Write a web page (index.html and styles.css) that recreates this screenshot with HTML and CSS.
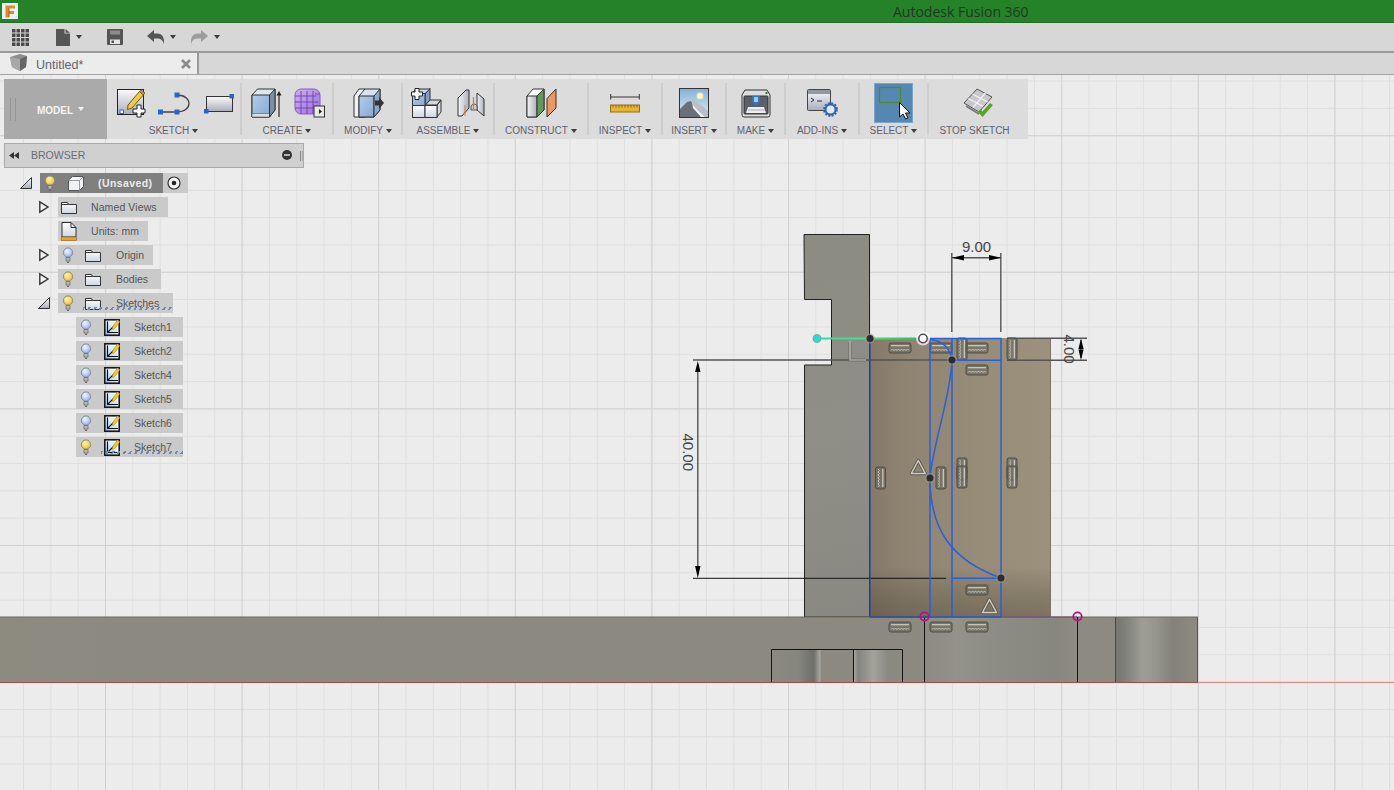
FILE: index.html
```html
<!DOCTYPE html>
<html lang="en">
<head>
<meta charset="utf-8">
<title>Autodesk Fusion 360</title>
<link rel="stylesheet" href="styles.css">
</head>
<body>
<svg class="defs" width="0" height="0" aria-hidden="true">
  <defs>
    <linearGradient id="paper" x1="0" y1="0" x2="0" y2="1"><stop offset="0" stop-color="#fbfbfc"/><stop offset="1" stop-color="#a7adba"/></linearGradient>
    <linearGradient id="paper2" x1="0" y1="0" x2="0" y2="1"><stop offset="0" stop-color="#ffffff"/><stop offset="1" stop-color="#cfd6e2"/></linearGradient>
    <linearGradient id="bluef" x1="0" y1="0" x2="1" y2="1"><stop offset="0" stop-color="#b5cdea"/><stop offset="1" stop-color="#86a8d2"/></linearGradient>
    <linearGradient id="purp" x1="0" y1="0" x2="1" y2="1"><stop offset="0" stop-color="#cfb0f2"/><stop offset="1" stop-color="#9c6fdc"/></linearGradient>
    <linearGradient id="greyf" x1="0" y1="0" x2="1" y2="0"><stop offset="0" stop-color="#f4f5f7"/><stop offset="1" stop-color="#aab0ba"/></linearGradient>
    <linearGradient id="sky" x1="0" y1="0" x2="0" y2="1"><stop offset="0" stop-color="#7fb2dc"/><stop offset="1" stop-color="#e4eef6"/></linearGradient>
    <linearGradient id="skbg" x1="0" y1="1" x2="1" y2="0"><stop offset="0" stop-color="#8fc0ee"/><stop offset=".6" stop-color="#e4f0fa"/><stop offset="1" stop-color="#ffffff"/></linearGradient>
    <radialGradient id="yel" cx=".4" cy=".35" r=".7"><stop offset="0" stop-color="#fff6b0"/><stop offset="1" stop-color="#eebc20"/></radialGradient>
    <radialGradient id="blu" cx=".4" cy=".35" r=".7"><stop offset="0" stop-color="#f2f6ff"/><stop offset="1" stop-color="#95b1e6"/></radialGradient>
    <symbol id="bulb-y" viewBox="0 0 12 16"><circle cx="6" cy="5.5" r="4.6" fill="url(#yel)" stroke="#8f8a70"/><path d="M4 10.5h4v3.6h-4z" fill="#b4b4b4" stroke="#6c6c6c" stroke-width=".7"/><path d="M5 15.3h2" stroke="#555"/></symbol>
    <symbol id="bulb-b" viewBox="0 0 12 16"><circle cx="6" cy="5.5" r="4.6" fill="url(#blu)" stroke="#7d8aa8"/><path d="M4 10.5h4v3.6h-4z" fill="#b4b4b4" stroke="#6c6c6c" stroke-width=".7"/><path d="M5 15.3h2" stroke="#555"/></symbol>
    <symbol id="folder" viewBox="0 0 16 13"><path d="M.5 12.5V1.5h6l1 2h8v9z" fill="url(#paper2)" stroke="#333"/><path d="M.5 3.5h7" stroke="#333"/></symbol>
    <symbol id="sk" viewBox="0 0 16 18"><rect x=".8" y="1.8" width="14.4" height="15.4" fill="url(#skbg)" stroke="#111" stroke-width="1.500"/><path d="M3.500 3.500V14.500H14M3.500 14.500L10 8" stroke="#111" fill="none" stroke-width="1.100"/><path d="M8.500 9L13.500 2l2.300 1.800L10.500 10.800l-2.200.7z" fill="#f6cc17" stroke="#a07a08" stroke-width=".5"/></symbol>
    <g id="hc">
      <rect x="-11" y="-5" width="22" height="10" rx="2" fill="#6f6c60" fill-opacity=".7" stroke="#4f4d46"/>
      <path d="M-9 -2.300H9" stroke="#cfcdc5" stroke-width="1.200"/>
      <path d="M-9 2.600l1.500-1.600 1.500 1.600 1.500-1.600 1.500 1.600 1.500-1.600 1.500 1.600 1.500-1.600 1.500 1.600 1.500-1.600 1.500 1.600 1.500-1.600 1.500 1.600" fill="none" stroke="#c6c4bc"/>
    </g>
    <g id="vc"><use href="#hc" transform="rotate(90)"/></g>
    <g id="tri"><path d="M0 -6.500L7 6.500H-7Z" fill="none" stroke="#5d5a50" stroke-width="3.400" stroke-linejoin="round"/><path d="M0 -6.500L7 6.500H-7Z" fill="none" stroke="#cfcdc5" stroke-width="1.500" stroke-linejoin="round"/></g>
    <g id="dot"><circle r="5" fill="#9a9a96" fill-opacity=".55"/><circle r="3.500" fill="#2a2c30"/></g>
    <pattern id="minor" width="27.32" height="27.32" patternUnits="userSpaceOnUse" x="23.04" y="25.92"><path d="M.5 0V27.32M0 .5H27.32" fill="none" stroke="#dfdfdf"/></pattern>
    <pattern id="major" width="136.6" height="136.6" patternUnits="userSpaceOnUse" x="105" y="135.2"><path d="M.5 0V136.6M0 .5H136.6" fill="none" stroke="#d2d2d2"/></pattern>
    <linearGradient id="upright" x1="804" y1="234" x2="870" y2="617" gradientUnits="userSpaceOnUse"><stop offset="0" stop-color="#8d8c82"/><stop offset=".5" stop-color="#8f8e87"/><stop offset="1" stop-color="#8a8981"/></linearGradient>
    <linearGradient id="brown" x1="870" y1="0" x2="1051" y2="0" gradientUnits="userSpaceOnUse"><stop offset="0" stop-color="#85796a"/><stop offset=".2" stop-color="#8f8472"/><stop offset=".6" stop-color="#978c78"/><stop offset="1" stop-color="#9c917d"/></linearGradient>
    <linearGradient id="shade" x1="0" y1="338" x2="0" y2="617" gradientUnits="userSpaceOnUse"><stop offset="0" stop-color="#000" stop-opacity="0"/><stop offset=".82" stop-color="#000" stop-opacity="0"/><stop offset="1" stop-color="#2b2412" stop-opacity=".28"/></linearGradient>
    <linearGradient id="basefill" x1="0" y1="0" x2="1198" y2="0" gradientUnits="userSpaceOnUse"><stop offset="0" stop-color="#8d8a80"/><stop offset=".5" stop-color="#8b8980"/><stop offset="1" stop-color="#8d8b81"/></linearGradient>
    <linearGradient id="band1" x1="925" y1="0" x2="1078" y2="0" gradientUnits="userSpaceOnUse"><stop offset="0" stop-color="#8c8a81"/><stop offset=".2" stop-color="#92918a"/><stop offset=".5" stop-color="#8c8c85"/><stop offset=".85" stop-color="#87867f"/><stop offset="1" stop-color="#8e8c83"/></linearGradient>
    <linearGradient id="band2" x1="1116" y1="0" x2="1198" y2="0" gradientUnits="userSpaceOnUse"><stop offset="0" stop-color="#74766f"/><stop offset=".12" stop-color="#7f817a"/><stop offset=".32" stop-color="#9d9c95"/><stop offset=".48" stop-color="#97968e"/><stop offset=".7" stop-color="#83827a"/><stop offset="1" stop-color="#8d8b81"/></linearGradient>
    <linearGradient id="cut1" x1="771" y1="0" x2="821" y2="0" gradientUnits="userSpaceOnUse"><stop offset="0" stop-color="#8b8a81"/><stop offset=".55" stop-color="#86867e"/><stop offset=".86" stop-color="#6d6f69"/><stop offset=".98" stop-color="#a9a9a2"/><stop offset="1" stop-color="#8d8b82"/></linearGradient>
    <linearGradient id="cut2" x1="853" y1="0" x2="903" y2="0" gradientUnits="userSpaceOnUse"><stop offset="0" stop-color="#b0b0a9"/><stop offset=".1" stop-color="#82837c"/><stop offset=".4" stop-color="#a3a39c"/><stop offset=".7" stop-color="#8a8a82"/><stop offset="1" stop-color="#8c8a81"/></linearGradient>
    <linearGradient id="construct" x1="817" y1="0" x2="923" y2="0" gradientUnits="userSpaceOnUse"><stop offset="0" stop-color="#2fdcb4"/><stop offset=".5" stop-color="#4fe07c"/><stop offset="1" stop-color="#2eb86a"/></linearGradient>
  </defs>
</svg>
<div class="app">
  <header class="titlebar">
    <svg class="logo" width="16" height="16" viewBox="0 0 16 16"><rect width="16" height="16" fill="#e4f3f7"/><path d="M3.500 2.500h9.500v3H7v2.500h5v3H7v3.500H3.500z" fill="#e8842a"/><path d="M7 5.500v8.500" stroke="#b85f14"/></svg>
    <span class="app-title">Autodesk Fusion 360</span>
  </header>
  <nav class="quickbar">
    <svg class="qa qa-grid" width="17" height="17" viewBox="0 0 17 17"><path d="M0 0h3.500v3.500H0zM4.500 0H8v3.500H4.500zM9 0h3.500v3.500H9zM13.500 0H17v3.500h-3.500zM0 4.500h3.500V8H0zM4.500 4.500H8V8H4.500zM9 4.500h3.500V8H9zM13.500 4.500H17V8h-3.500zM0 9h3.500v3.500H0zM4.500 9H8v3.500H4.500zM9 9h3.500v3.500H9zM13.500 9H17v3.500h-3.500zM0 13.500h3.500V17H0zM4.500 13.500H8V17H4.500zM9 13.500h3.500V17H9zM13.500 13.500H17V17h-3.500z" fill="#4a4a4a"/></svg>
    <svg class="qa qa-doc" width="14" height="17" viewBox="0 0 14 17"><path d="M0 0h8.500v4.500H14V17H0zM9.500 0L14 3.700H9.500z" fill="#555"/></svg>
    <i class="caret caret-q"></i>
    <svg class="qa qa-save" width="16" height="16" viewBox="0 0 16 16"><path d="M1 0h14a1 1 0 0 1 1 1v14a1 1 0 0 1-1 1H1a1 1 0 0 1-1-1V1a1 1 0 0 1 1-1z" fill="#555"/><rect x="3" y="1.500" width="10" height="4" fill="#8c8c8c"/><rect x="3" y="10.500" width="10" height="4.500" fill="#e4e4e4"/><rect x="4.500" y="11.500" width="2.500" height="2.500" fill="#555"/></svg>
    <svg class="qa qa-undo" width="17" height="14" viewBox="0 0 17 14"><path d="M7 0v3.500h3.500c4 0 6.500 3 6.500 8v2.500c-1-3.500-3-5.500-6.500-5.500H7V12L0 6z" fill="#555"/></svg>
    <i class="caret caret-q caret-undo"></i>
    <svg class="qa qa-redo" width="17" height="14" viewBox="0 0 17 14"><path d="M10 0v3.500H6.500c-4 0-6.500 3-6.500 8v2.500c1-3.500 3-5.500 6.500-5.500H10V12l7-6z" fill="#9c9c9c"/></svg>
    <i class="caret caret-q caret-off"></i>
  </nav>
  <div class="tabbar">
    <div class="tab">
      <svg class="tab-cube" width="17" height="17" viewBox="0 0 17 17"><path d="M0 3L10 0l7 2-1 11-6 4-8-4z" fill="#8c8c8c"/><path d="M0 3l10 2v12l-8-4z" fill="#a8a8a8"/><path d="M10 5l7-3-1 11-6 4z" fill="#666"/></svg>
      <span class="tab-name">Untitled*</span>
      <svg class="tab-x" width="10" height="10" viewBox="0 0 10 10"><path d="M1 1l8 8M9 1l-8 8" stroke="#8a8a8a" stroke-width="2.600"/></svg>
    </div>
  </div>
  <main class="workspace">
    <svg class="canvas" viewBox="0 75 1394 715" width="1394" height="715">
      <rect x="0" y="75" width="1394" height="715" fill="#ececec"/>
      <rect x="0" y="75" width="1394" height="715" fill="url(#minor)"/>
      <rect x="0" y="75" width="1394" height="715" fill="url(#major)"/>

      <path d="M804 234.500H869.500V617H804.500V365H831.500V299.500H804.500Z" fill="url(#upright)" stroke="#222"/>
      <rect x="870" y="338" width="181" height="279" fill="url(#brown)"/>
      <rect x="870" y="338" width="181" height="279" fill="url(#shade)"/>
      <path d="M1050.500 338V617" stroke="#7d7465"/>

      <rect x="0" y="617" width="1198" height="65" fill="url(#basefill)"/>
      <rect x="925" y="617.500" width="153" height="65" fill="url(#band1)"/>
      <rect x="1116" y="617.500" width="82" height="65" fill="url(#band2)"/>
      <rect x="771" y="649" width="50" height="33" fill="url(#cut1)"/>
      <rect x="853" y="649" width="50" height="33" fill="url(#cut2)"/>
      <path d="M0 617H1198" stroke="#6b6b64" stroke-width="1"/>
      <path d="M1197.500 617V682" stroke="#555650"/>
      <path d="M1115.500 617V682" stroke="#4a4b46"/>
      <path d="M771.500 682V649.500H902.500V682M853.500 649.500V682M924.500 617V682M1077.500 617V682" fill="none" stroke="#111"/>
      <path d="M0 682.500H1198" stroke="#a44a4a"/>
      <path d="M1198 682.500H1394" stroke="#e58a8a"/>

      <g fill="none" stroke="#555" stroke-width="1.400">
        <path d="M693 360H952"/>
        <path d="M697.800 364V574"/>
        <path d="M951.800 253V332M1000.800 253V332"/>
        <path d="M952 257.800H1001"/>
        <path d="M1007 338.200H1087M1007 360.200H1087"/>
        <path d="M1081 340V358"/>
      </g>
      <path d="M693 578.300H946" stroke="#111"/>
      <path d="M697.800 361l-2.700 11h5.400zM697.800 578l-2.700-12h5.400zM952 257.800l12-2.800v5.600zM1001 257.800l-12-2.800v5.600zM1081 338.500l-2.600 10.500h5.200zM1081 360l-2.600-10.500h5.200z" fill="#000"/>
      <text class="dim" x="962" y="251.500">9.00</text>
      <text class="dim" transform="translate(682.500 433.500) rotate(90)">40.00</text>
      <text class="dim" transform="translate(1064 334.500) rotate(90)">4.00</text>

      <g fill="none" stroke="#b8b6ae" stroke-width="2.400" stroke-opacity=".7"><path d="M850 341V360H866"/></g>
      <g fill="none" stroke="#6b6a63" stroke-width=".7"><path d="M848.600 342V361.300H866M851.400 342V358.700H866"/></g>

      <use href="#hc" x="900" y="348"/>
      <use href="#hc" x="941" y="348"/>
      <use href="#hc" x="977" y="348"/>
      <use href="#hc" x="977" y="370"/>
      <use href="#hc" x="977" y="590"/>
      <use href="#hc" x="900" y="627"/>
      <use href="#hc" x="941" y="627"/>
      <use href="#hc" x="977" y="627"/>
      <use href="#vc" x="962" y="349"/>
      <use href="#vc" x="1012" y="349"/>
      <use href="#vc" x="880.500" y="478"/>
      <use href="#vc" x="941" y="478"/>
      <use href="#vc" x="962" y="469"/>
      <use href="#vc" x="962" y="477"/>
      <use href="#vc" x="1012" y="469"/>
      <use href="#vc" x="1012" y="477"/>
      <use href="#tri" x="918.300" y="467"/>
      <use href="#tri" x="989.500" y="606"/>

      <g fill="none" stroke="#2a5fd8" stroke-width="1.500">
        <path d="M930 338.500H1001V617M930 338.500V617M952 338.500V617M952 360.200H1001M952 578.300H1001"/>
        <path d="M931 339.500Q949 342 952 360"/>
        <path d="M952 360C951 395 932 448 930 478C930 528 950 560 1001 578"/>
      </g>
      <path d="M870 338V617" stroke="#2d4c96" stroke-width="1.400"/>
      <path d="M870 617H930" stroke="#2d4c96" stroke-width="1.400"/>
      <path d="M930 617H1001" stroke="#2a55c0" stroke-width="1.400"/>
      <path d="M1001 617H1077" stroke="#7a4a80" stroke-width="1.200"/>

      <path d="M817 338.500H923" stroke="url(#construct)" stroke-width="2"/>
      <use href="#dot" x="870" y="338.500"/>
      <use href="#dot" x="952" y="360"/>
      <use href="#dot" x="930" y="478"/>
      <use href="#dot" x="1001" y="578"/>
      <circle cx="817" cy="338.500" r="4" fill="#29dcd0" stroke="#7fa8a4"/>
      <circle cx="923" cy="338.500" r="7" fill="#fff" fill-opacity=".7"/>
      <circle cx="923" cy="338.500" r="4.200" fill="#fff" stroke="#4c4c4c" stroke-width="1.500"/>
      <circle cx="924.500" cy="616.500" r="4.200" fill="none" stroke="#b01488" stroke-width="1.800"/>
      <circle cx="1077.500" cy="616.500" r="4.200" fill="none" stroke="#b01488" stroke-width="1.800"/>
    </svg>

    <section class="toolbar">
      <div class="model">
        <span class="grip"></span>
        <span class="model-label">MODEL</span>
        <i class="caret caret-model"></i>
      </div>

      <div class="group g-sketch">
        <div class="icons gap-sketch">
          <svg width="30" height="30" viewBox="0 0 30 30"><rect x=".5" y="1.500" width="26" height="25" fill="url(#paper)" stroke="#222"/><rect x="3" y="22" width="3.500" height="3.500" fill="#fff" stroke="#3568c8"/><path d="M11 17l11.500-13.500 4 3.300L15 20l-4.500 1.500z" fill="#f6c93f" stroke="#5a4a20" stroke-width=".9"/><path d="M22.500 3.500l1.500-1.800 4 3.300-1.500 1.800z" fill="#d88a4a" stroke="#5a4a20" stroke-width=".7"/><path d="M20 17h4v4h4v4h-4v4h-4v-4h-4v-4h4z" fill="#fff" stroke="#222"/></svg>
          <svg width="34" height="24" viewBox="0 0 34 24"><path d="M3 21H19M19 4C35 4 35 21 19 21" fill="none" stroke="#444" stroke-width="1.300"/><rect x="0" y="18.500" width="5" height="5" fill="#2f62c8"/><rect x="16.500" y="18.500" width="5" height="5" fill="#2f62c8"/><rect x="16.500" y="1.500" width="5" height="5" fill="#2f62c8"/></svg>
          <svg width="32" height="21" viewBox="0 0 32 21"><rect x="3.500" y="3.500" width="26" height="15" fill="url(#paper)" stroke="#333"/><rect x="26.500" y="1" width="4.500" height="4.500" fill="#2f62c8"/><rect x="1" y="16" width="4.500" height="4.500" fill="#2f62c8"/></svg>
        </div>
        <div class="label">SKETCH<i class="caret"></i></div>
      </div>

      <div class="group g-create">
        <div class="icons gap-create">
          <svg width="30" height="31" viewBox="0 0 30 31"><path d="M1 7L6.500 1H24V22l-5.500 7H1z" fill="#dfe6ee" stroke="#333"/><path d="M1 7H18.500V29H1z" fill="url(#bluef)" stroke="#333"/><path d="M1 25.500H18.500V29H1z" fill="#dce0e6" stroke="#555" stroke-width=".6"/><path d="M18.500 7L24 1V22l-5.500 7z" fill="#7e8ea5" stroke="#333"/><path d="M28 29V5" stroke="#333" stroke-width="1.300"/><path d="M28 3l-2.500 4.500h5z" fill="#222"/></svg>
          <svg width="31" height="30" viewBox="0 0 31 30"><rect x="1" y="1" width="25" height="25" rx="6" fill="url(#purp)" stroke="#8a5fc4"/><path d="M1 8H22M1 14H24M1 20H24M7 3V26M13 3V26M19 3V26M21 6H26" stroke="#6d3fb4" stroke-width=".9" fill="none"/><rect x="20" y="18" width="10.500" height="11" fill="#e9e9e9" stroke="#333"/><path d="M22 23.500h3V21l3 2.500-3 2.500v-2.500h-3z" fill="#222"/></svg>
        </div>
        <div class="label">CREATE<i class="caret"></i></div>
      </div>

      <div class="group g-modify">
        <div class="icons">
          <svg width="31" height="31" viewBox="0 0 31 31"><path d="M1 8L6 1H12V29H1z" fill="#eef1f5" stroke="#333"/><path d="M6 29V8L12 1H27V22l-6 7z" fill="#d9e2ec" stroke="#333"/><path d="M6 8H21V29H6z" fill="url(#bluef)" stroke="#333"/><path d="M21 8l6-7v21l-6 7z" fill="#8ea8c8" stroke="#333"/><path d="M22 12.500h4V9l5 6-5 6v-3.500h-4z" fill="#333"/></svg>
        </div>
        <div class="label">MODIFY<i class="caret"></i></div>
      </div>

      <div class="group g-assemble">
        <div class="icons gap-assemble">
          <svg width="31" height="30" viewBox="0 0 31 30"><path d="M14 17l4-5h12l-4 5zM26 17l4-5v12l-4 5z" fill="#d4d8de" stroke="#333"/><rect x="1.500" y="17.500" width="12.500" height="12" fill="url(#paper2)" stroke="#333"/><rect x="14" y="17.500" width="12" height="12" fill="url(#paper2)" stroke="#333"/><path d="M14 5.500l5-5V12l-5 5.500z" fill="#7f9fc8" stroke="#333"/><path d="M5 1H19L14 5.500H1z" fill="#c8d8ec" stroke="#333"/><rect x="1.500" y="5.500" width="12.500" height="12" fill="url(#bluef)" stroke="#333"/><path d="M4 .5h4v3.500h3.500v4H8v3.500H4V8H.5V4H4z" fill="#fff" stroke="#222"/></svg>
          <svg width="28" height="28" viewBox="0 0 28 28"><path d="M1 27V9L9 1h3v18l-7 8z" fill="url(#greyf)" stroke="#333"/><path d="M20 4l7 6v17l-7-6z" fill="url(#greyf)" stroke="#333"/><path d="M14 18c0-4 6-4 6 0v3h-6z" fill="#cfd3d8" stroke="#333" stroke-width=".8"/><path d="M16.500 8v12" stroke="#e67822" stroke-width="1.300"/><path d="M8 27V16" stroke="#e67822"/></svg>
        </div>
        <div class="label">ASSEMBLE<i class="caret"></i></div>
      </div>

      <div class="group g-construct">
        <div class="icons">
          <svg width="31" height="30" viewBox="0 0 31 30"><path d="M1 8L7 1H18V22l-7 7H1z" fill="#fff" stroke="#333"/><path d="M1 8H11V29H1z" fill="url(#greyf)" stroke="#333"/><path d="M11 8l7-7V22l-7 7z" fill="#5f9a58" stroke="#333"/><path d="M21 10.500L30 1V20l-9 9z" fill="#e99a62" stroke="#333"/></svg>
        </div>
        <div class="label">CONSTRUCT<i class="caret"></i></div>
      </div>

      <div class="group g-inspect">
        <div class="icons">
          <svg width="30" height="19" viewBox="0 0 30 19"><path d="M1 3H29M.7 0V5.500M29.300 0V5.500" stroke="#333" fill="none"/><rect x=".5" y="11" width="29" height="7" fill="#eab52d" stroke="#8d6d20"/><path d="M3 11v2.500M6 11v2.500M9 11v2.500M12 11v2.500M15 11v2.500M18 11v2.500M21 11v2.500M24 11v2.500M27 11v2.500" stroke="#6e5618" stroke-width=".8"/></svg>
        </div>
        <div class="label">INSPECT<i class="caret"></i></div>
      </div>

      <div class="group g-insert">
        <div class="icons">
          <svg width="30" height="30" viewBox="0 0 30 30"><rect x=".5" y=".5" width="29" height="29" fill="url(#sky)" stroke="#333"/><rect x="18" y="5" width="6" height="6" rx="1.500" fill="#fff8c8" stroke="#f2d98a"/><path d="M1 29V21L8 14l4-1 7 8 3 8z" fill="#6c6f78"/><path d="M12 13l3-2 3 4 7 4 4 4v6h-7z" fill="#b9c0c8"/><path d="M13 13c1 5 5 9 13 16h-4L14 20z" fill="#f4f6f8"/></svg>
        </div>
        <div class="label">INSERT<i class="caret"></i></div>
      </div>

      <div class="group g-make">
        <div class="icons">
          <svg width="30" height="29" viewBox="0 0 30 29"><path d="M1 6L4 1H26l3 5V26a2 2 0 0 1-2 2H3a2 2 0 0 1-2-2z" fill="#dedede" stroke="#333"/><rect x="3" y="7" width="24" height="18" rx="1" fill="#5b5f66" stroke="#333"/><path d="M11 7h8v6l-4 4-4-4z" fill="#2f74c8"/><path d="M13 8h4v5h-4z" fill="#a8c8ee"/><path d="M7 18h16l2 6H5z" fill="#eceef0"/><path d="M7 21h17" stroke="#aaa"/><rect x="24.500" y="3" width="2" height="2" fill="#0c8a2c"/></svg>
        </div>
        <div class="label">MAKE<i class="caret"></i></div>
      </div>

      <div class="group g-addins">
        <div class="icons">
          <svg width="31" height="28" viewBox="0 0 31 28"><rect x=".5" y=".5" width="23" height="21" rx="1" fill="url(#paper)" stroke="#444"/><rect x="1" y="1" width="22" height="4" fill="#9398a2"/><path d="M4 9l3 2-3 2M10 12h5" fill="none" stroke="#333"/><circle cx="23.500" cy="20.500" r="5" fill="#dfe9f6" stroke="#2d62b0" stroke-width="2"/><circle cx="23.500" cy="20.500" r="6.500" fill="none" stroke="#2d62b0" stroke-width="1.800" stroke-dasharray="2 1.400"/></svg>
        </div>
        <div class="label">ADD-INS<i class="caret"></i></div>
      </div>

      <div class="group g-select">
        <div class="select-btn">
          <svg width="39" height="40" viewBox="0 0 39 40"><rect x="4.500" y="3.500" width="21" height="15" fill="none" stroke="#4f8a2a" stroke-width="1.200"/><path d="M24.500 18.500V33l3.500-3 2.500 5 2.500-1-2.500-5h4.500z" fill="#fff" stroke="#111"/></svg>
        </div>
        <div class="label">SELECT<i class="caret"></i></div>
      </div>

      <div class="group g-stop">
        <div class="icons">
          <svg width="31" height="31" viewBox="0 0 31 31"><path d="M1 15L14 1 29 9 16 24z" fill="#c6c8cc" stroke="#555"/><path d="M5.500 10.500L20 18.500M9.500 6L24.500 14M10 19.500L22.500 5" fill="none" stroke="#f4f4f4" stroke-width="1.200"/><path d="M3 18l13 8" stroke="#777" stroke-width="1.500"/><path d="M15 24l4.500 5L30 17l-3-2-7.500 8.500-2-2.500z" fill="#5ba51c"/></svg>
        </div>
        <div class="label label-stop">STOP SKETCH</div>
      </div>
    </section>

    <section class="browser">
      <svg class="b-back" width="10" height="7" viewBox="0 0 10 7"><path d="M5 0v7L0 3.500zM10 0v7L5 3.500z" fill="#333"/></svg>
      <span class="b-title">BROWSER</span>
      <svg class="b-min" width="10" height="10" viewBox="0 0 10 10"><circle cx="5" cy="5" r="5" fill="#333"/><path d="M2 5h6" stroke="#ddd" stroke-width="1.500"/></svg>
      <span class="b-grip"></span>
    </section>

    <ul class="tree">
      <li class="row row-root">
        <svg class="twisty" width="12" height="12" viewBox="0 0 12 12"><path d="M.5 11.500L11.500 .5V11.500z" fill="url(#paper)" stroke="#333"/></svg>
        <div class="chip chip-root">
          <div class="chip-dark">
            <svg class="bulb"><use href="#bulb-y"/></svg>
            <svg class="cube" width="16" height="15" viewBox="0 0 16 15"><path d="M.5 4L4.500 .5H15.500V10.500L11.500 14.500H.5z" fill="#f0f2f5" stroke="#555"/><path d="M11.500 4.500V14.500M.5 4.500H11.500L15.500 .5" fill="none" stroke="#999"/></svg>
            <span class="root-name">(Unsaved)</span>
          </div>
          <svg class="target" width="14" height="14" viewBox="0 0 14 14"><circle cx="7" cy="7" r="6" fill="#f4f4f4" stroke="#333" stroke-width="1.200"/><circle cx="7" cy="7" r="2.300" fill="#222"/></svg>
        </div>
      </li>
      <li class="row">
        <svg class="twisty" width="10" height="12" viewBox="0 0 10 12"><path d="M.8 .8L9 6 .8 11.200z" fill="#f4f4f4" stroke="#333" stroke-width="1.400"/></svg>
        <div class="chip w-named">
          <svg class="ico ico-first" width="16" height="13"><use href="#folder"/></svg>
          <span class="lbl lbl-first">Named Views</span>
        </div>
      </li>
      <li class="row">
        <span class="twisty-empty"></span>
        <div class="chip w-units">
          <svg class="ico ico-first" width="16" height="19" viewBox="0 0 15 19"><path d="M.5 15V.5H9.500L14.500 5.500V15z" fill="url(#paper2)" stroke="#333"/><path d="M9.500 .5V5.500H14.500" fill="none" stroke="#333"/><rect x="0" y="15" width="15" height="3.500" fill="#e8a52a" stroke="#8d6414" stroke-width=".6"/></svg>
          <span class="lbl lbl-first">Units: mm</span>
        </div>
      </li>
      <li class="row">
        <svg class="twisty" width="10" height="12" viewBox="0 0 10 12"><path d="M.8 .8L9 6 .8 11.200z" fill="#f4f4f4" stroke="#333" stroke-width="1.400"/></svg>
        <div class="chip w-origin">
          <svg class="bulb"><use href="#bulb-b"/></svg>
          <svg class="ico" width="16" height="13"><use href="#folder"/></svg>
          <span class="lbl">Origin</span>
        </div>
      </li>
      <li class="row">
        <svg class="twisty" width="10" height="12" viewBox="0 0 10 12"><path d="M.8 .8L9 6 .8 11.200z" fill="#f4f4f4" stroke="#333" stroke-width="1.400"/></svg>
        <div class="chip w-bodies">
          <svg class="bulb"><use href="#bulb-y"/></svg>
          <svg class="ico" width="16" height="13"><use href="#folder"/></svg>
          <span class="lbl">Bodies</span>
        </div>
      </li>
      <li class="row">
        <svg class="twisty twisty-open" width="12" height="12" viewBox="0 0 12 12"><path d="M.5 11.500L11.500 .5V11.500z" fill="url(#paper)" stroke="#333"/></svg>
        <div class="chip w-sketches hatched">
          <svg class="bulb"><use href="#bulb-y"/></svg>
          <svg class="ico" width="16" height="13"><use href="#folder"/></svg>
          <span class="lbl">Sketches</span>
        </div>
      </li>
      <li class="row row-leaf">
        <div class="chip w-sketch">
          <svg class="bulb"><use href="#bulb-b"/></svg>
          <svg class="ico ico-sk" width="16" height="18"><use href="#sk"/></svg>
          <span class="lbl lbl-sk">Sketch1</span>
        </div>
      </li>
      <li class="row row-leaf">
        <div class="chip w-sketch">
          <svg class="bulb"><use href="#bulb-b"/></svg>
          <svg class="ico ico-sk" width="16" height="18"><use href="#sk"/></svg>
          <span class="lbl lbl-sk">Sketch2</span>
        </div>
      </li>
      <li class="row row-leaf">
        <div class="chip w-sketch">
          <svg class="bulb"><use href="#bulb-b"/></svg>
          <svg class="ico ico-sk" width="16" height="18"><use href="#sk"/></svg>
          <span class="lbl lbl-sk">Sketch4</span>
        </div>
      </li>
      <li class="row row-leaf">
        <div class="chip w-sketch">
          <svg class="bulb"><use href="#bulb-b"/></svg>
          <svg class="ico ico-sk" width="16" height="18"><use href="#sk"/></svg>
          <span class="lbl lbl-sk">Sketch5</span>
        </div>
      </li>
      <li class="row row-leaf">
        <div class="chip w-sketch">
          <svg class="bulb"><use href="#bulb-b"/></svg>
          <svg class="ico ico-sk" width="16" height="18"><use href="#sk"/></svg>
          <span class="lbl lbl-sk">Sketch6</span>
        </div>
      </li>
      <li class="row row-leaf">
        <div class="chip w-sketch hatched">
          <svg class="bulb"><use href="#bulb-y"/></svg>
          <svg class="ico ico-sk" width="16" height="18"><use href="#sk"/></svg>
          <span class="lbl lbl-sk">Sketch7</span>
        </div>
      </li>
    </ul>
  </main>
</div>
</body>
</html>
```

FILE: styles.css
```css
* { box-sizing: border-box; }
html, body { margin: 0; padding: 0; }
body { font-family: "Liberation Sans", Arial, sans-serif; background: #ececec; }
.defs { position: absolute; width: 0; height: 0; }
svg { display: block; flex: none; overflow: visible; }

.app { width: 1394px; height: 790px; display: flex; flex-direction: column; overflow: hidden; }

/* title bar */
.titlebar { height: 23px; flex: none; display: flex; align-items: center; background: #258229; border-bottom: 1px solid #1e6d22; }
.logo { margin-left: 2px; margin-top: -1px; }
.app-title { margin-left: 875px; font-family: "Open Sans", sans-serif; font-size: 14px; color: #1d3a1f; white-space: nowrap; }

/* quick access */
.quickbar { height: 30px; flex: none; display: flex; align-items: center; background: #d7d7d7; border-bottom: 2px solid #9a9a9a; }
.qa-grid { margin-left: 12px; }
.qa-doc { margin-left: 27px; }
.caret-q { margin-left: 6px; }
.qa-save { margin-left: 25px; }
.qa-undo { margin-left: 24px; }
.caret-undo { margin-left: 6px; }
.qa-redo { margin-left: 15px; }
.caret-off { border-top-color: #9c9c9c; }

.caret { display: inline-block; width: 0; height: 0; border-left: 3.5px solid transparent; border-right: 3.5px solid transparent; border-top: 4px solid #3c3c3c; }

/* tabs */
.tabbar { height: 22px; flex: none; display: flex; background: #d7d7d7; border-bottom: 1px solid #a3a3a3; }
.tab { width: 199px; display: flex; align-items: center; background: #ececec; border-right: 2px solid #9a9a9a; }
.tab-cube { margin-left: 10px; margin-top: -3px; }
.tab-name { margin-left: 9px; margin-top: 3px; font-size: 12.5px; color: #5e6573; }
.tab-x { margin-left: auto; margin-right: 6px; }

/* workspace */
.workspace { position: relative; flex: 1; min-height: 0; }
.canvas { position: absolute; left: 0; top: 0; }
.dim { font-family: "Liberation Sans", Arial, sans-serif; font-size: 15px; fill: #454545; }

/* toolbar */
.toolbar { position: relative; display: flex; width: 1024px; height: 60px; margin: 4px 0 0 4px; background: #dcdcdc; }
.model { width: 103px; flex: none; display: flex; align-items: center; background: #aaaaaa; color: #f4f4f4; }
.grip { width: 6px; height: 23px; margin-left: 6px; border-left: 1px solid #959595; border-right: 1px solid #959595; }
.model-label { margin-left: 21px; margin-top: 2px; font-size: 10px; font-weight: bold; }
.caret-model { margin-left: 5px; border-top-color: #f4f4f4; }

.group { flex: none; height: 52px; margin-top: 4px; display: flex; flex-direction: column; align-items: center; border-right: 2px solid #cecece; }
.icons { flex: none; height: 39px; padding-top: 1px; display: flex; align-items: center; justify-content: center; }
.gap-sketch { gap: 11px; padding-left: 4px; }
.gap-create { gap: 13px; padding-left: 2px; }
.gap-assemble { gap: 15px; }
.label { flex: none; height: 13px; margin-top: 2px; display: flex; align-items: center; font-size: 10px; line-height: 11px; color: #5b6170; white-space: nowrap; }
.label .caret { margin-left: 3px; }
.label-stop { margin-right: 8px; }
.g-sketch { width: 135px; }
.g-create { width: 92px; }
.g-modify { width: 69px; padding-left: 1px; }
.g-assemble { width: 92px; }
.g-construct { width: 94px; }
.g-inspect { width: 74px; }
.g-insert { width: 64px; }
.g-make { width: 59px; }
.g-addins { width: 74px; }
.g-select { width: 69px; }
.g-stop { width: 99px; border-right: 0; }
.select-btn { flex: none; width: 39px; height: 40px; margin-bottom: -1px; background: #5587b3; border: 1px solid #7fa5c6; }

/* browser */
.browser { position: relative; display: flex; align-items: center; width: 300px; height: 25px; margin: 4px 0 0 4px; background: #d0d0d0; border: 1px solid #aaaaaa; }
.b-back { margin-left: 4px; }
.b-title { margin-left: 12px; margin-top: -2px; font-size: 10.5px; color: #6a6d75; }
.b-min { margin-left: auto; margin-top: -1px; }
.b-grip { width: 3px; height: 10px; margin-left: 8px; border-left: 1px solid #888; border-right: 1px solid #aaa; }

.tree { position: relative; list-style: none; margin: 5px 0 0; padding: 0; display: flex; flex-direction: column; gap: 4px; font-size: 10.5px; color: #555; }
.row { height: 20px; display: flex; align-items: center; padding-left: 39px; }
.row-root { padding-left: 20px; }
.row-leaf { padding-left: 76px; }
.twisty { margin-right: 9px; }
.row-root .twisty { margin-right: 8px; }
.twisty-open { margin-left: -1px; margin-right: 8px; }
.twisty-empty { width: 19px; flex: none; }

.chip { height: 20px; display: flex; align-items: center; background: #cacaca; position: relative; }
.w-named { width: 110px; }
.w-units { width: 90px; }
.w-origin { width: 95px; }
.w-bodies { width: 103px; }
.w-sketches { width: 115px; }
.w-sketch { width: 107px; }
.chip-root { width: 148px; }
.chip-dark { width: 123px; height: 100%; display: flex; align-items: center; background: #808080; }
.root-name { margin-left: 14px; font-weight: bold; letter-spacing: .4px; color: #ececec; }
.cube { margin-left: 12px; }
.target { margin-left: 4px; }

.bulb { width: 12px; height: 16px; margin-left: 4px; }
.ico { margin-left: 11px; }
.ico-first { margin-left: 3px; }
.ico-sk { margin-left: 12px; }
.lbl { margin-left: 15px; white-space: nowrap; }
.lbl-first { margin-left: 14px; letter-spacing: .1px; }
.lbl-sk { margin-left: 14px; }

.hatched::after { content: ""; position: absolute; left: 25px; right: 0; bottom: 3px; height: 3px; background: repeating-linear-gradient(120deg, #6f88b8 0 2px, transparent 2px 5px); }
```
